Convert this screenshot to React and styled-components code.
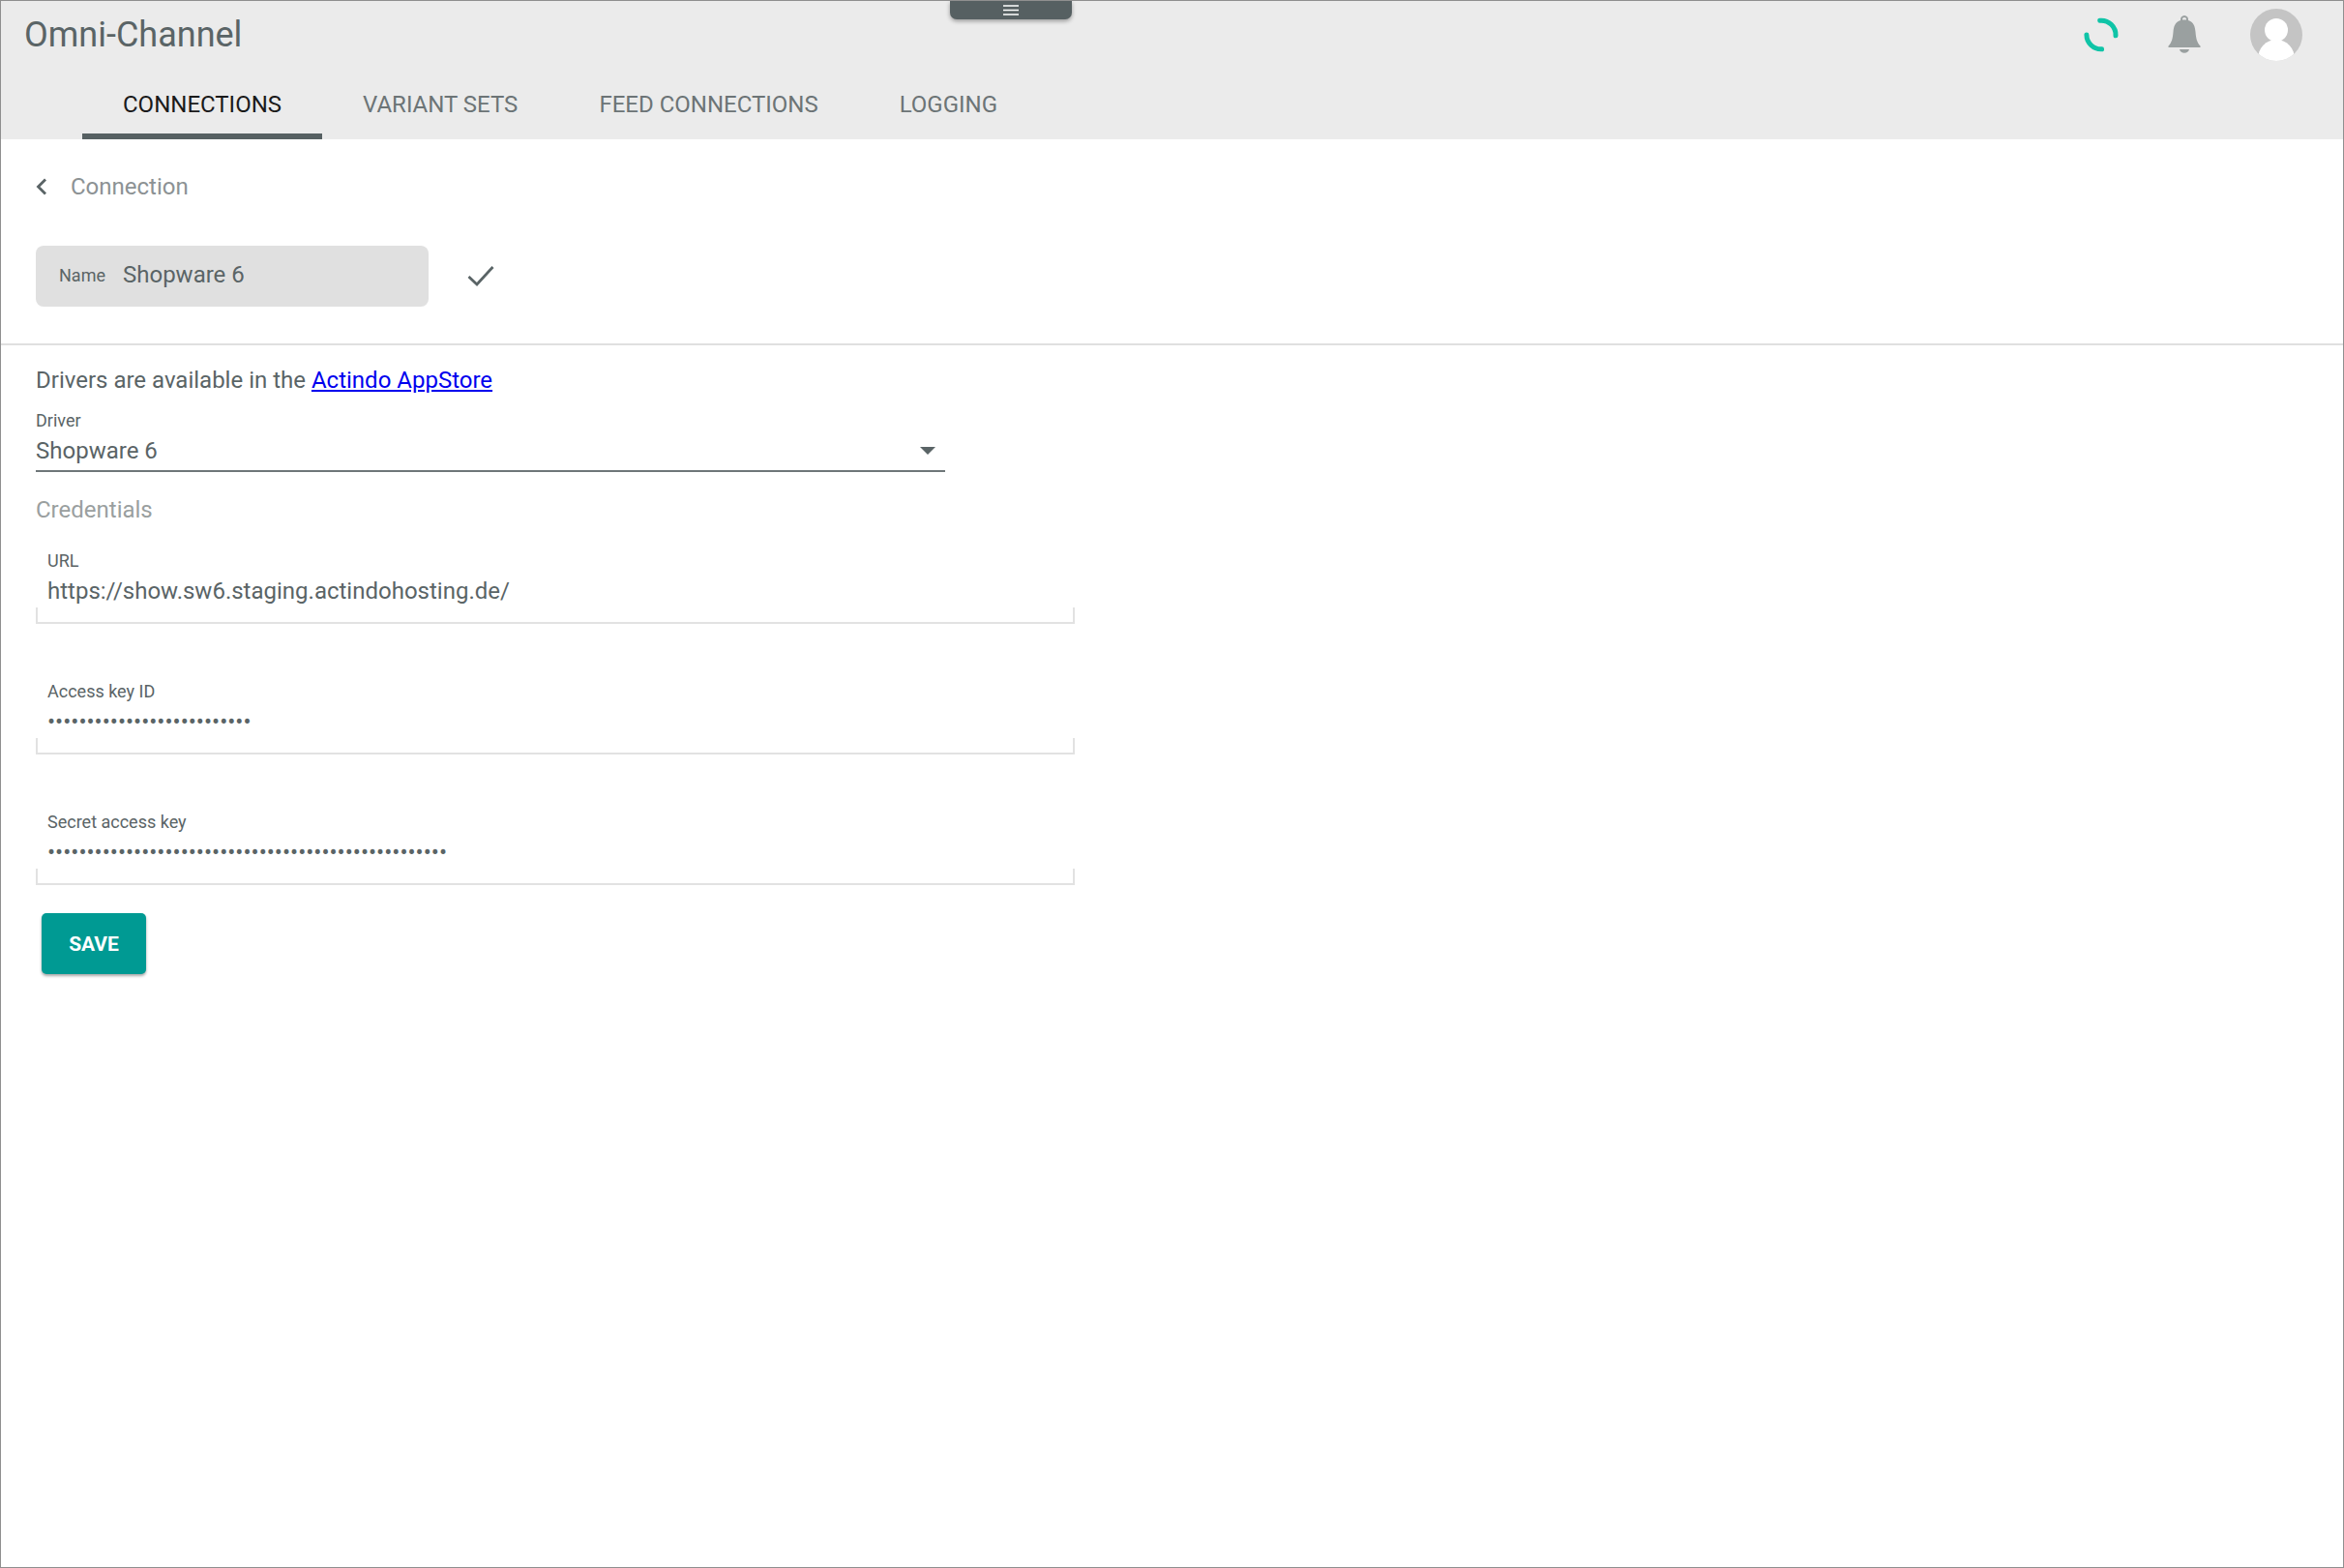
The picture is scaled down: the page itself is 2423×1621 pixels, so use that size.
import styled, { createGlobalStyle } from "styled-components";

const GlobalStyle = createGlobalStyle`
    html, body {
        margin: 0;
        padding: 0;
        background: #ffffff;
    }

    body {
        font-family: "Roboto", "Liberation Sans", sans-serif;
        color: #5a6466;
    }
`;

const credentials = [
    { label: "URL", value: "https://show.sw6.staging.actindohosting.de/" },
    { label: "Access key ID", value: "•".repeat(26) },
    { label: "Secret access key", value: "•".repeat(51) },
];

const tabs = ["CONNECTIONS", "VARIANT SETS", "FEED CONNECTIONS", "LOGGING"];

export default function App() {
    return (
        <>
            <GlobalStyle />
            <Frame>
                <Header>
                    <MenuHandle>
                        <svg width="16" height="11" viewBox="0 0 16 11">
                            <path d="M0 1h16M0 5.5h16M0 10h16" stroke="#ffffff" strokeWidth="1.4" />
                        </svg>
                    </MenuHandle>
                    <TopRow>
                        <Title>Omni-Channel</Title>
                        <Actions>
                            <Spinner width="36" height="36" viewBox="0 0 36 36" fill="none">
                                <path
                                    d="M16.7 3.2A15 15 0 0 1 33 18.8M2.9 18A15 15 0 0 0 18.6 32.8"
                                    stroke="#0fc4a7"
                                    strokeWidth="5"
                                    strokeLinecap="round"
                                />
                            </Spinner>
                            <BellIcon width="34" height="40" viewBox="0 0 34 40">
                                <path
                                    fillRule="evenodd"
                                    d="M17 0a4 4 0 0 1 3.900 4.900C26.500 6.500 28 11 28.500 17c.5 6.500 1.500 11 5 14.500V33H.5v-1.500C4 28 5 23.500 5.500 17 6 11 7.500 6.500 13.100 4.900A4 4 0 0 1 17 0Zm0 2a2 2 0 0 0-1.900 2.500h3.800A2 2 0 0 0 17 2Z"
                                />
                                <path d="M12 35h10a5.200 5.200 0 0 1-10 0Z" />
                            </BellIcon>
                            <Avatar>
                                <AvatarHead />
                                <AvatarBody />
                            </Avatar>
                        </Actions>
                    </TopRow>
                    <TabRow>
                        {tabs.map((tab, index) => (
                            <Tab key={tab} $active={index === 0}>{tab}</Tab>
                        ))}
                    </TabRow>
                </Header>

                <NameSection>
                    <BackRow>
                        <svg width="12" height="18" viewBox="0 0 12 18" fill="none">
                            <path d="M10 1.500 2.500 9l7.500 7.500" stroke="#5a6466" strokeWidth="2.800" />
                        </svg>
                        <BackLabel>Connection</BackLabel>
                    </BackRow>
                    <NameRow>
                        <NameField>
                            <NameLabel>Name</NameLabel>
                            <NameValue>Shopware 6</NameValue>
                        </NameField>
                        <ConfirmIcon width="28" height="22" viewBox="0 0 28 22" fill="none">
                            <path d="M1.500 12 10 20 26.500 2" stroke="#5a6466" strokeWidth="2.800" />
                        </ConfirmIcon>
                    </NameRow>
                </NameSection>

                <Content>
                    <Hint>
                        Drivers are available in the <HintLink href="#">Actindo AppStore</HintLink>
                    </Hint>
                    <DriverLabel>Driver</DriverLabel>
                    <Select>
                        <span>Shopware 6</span>
                        <Caret />
                    </Select>
                    <SectionTitle>Credentials</SectionTitle>
                    <Fields>
                        {credentials.map((field) => (
                            <Field key={field.label}>
                                <SmallLabel>{field.label}</SmallLabel>
                                <FieldValue>{field.value}</FieldValue>
                            </Field>
                        ))}
                    </Fields>
                    <SaveButton type="button">SAVE</SaveButton>
                </Content>
            </Frame>
        </>
    );
}

const Frame = styled.div`
    box-sizing: border-box;
    width: 2423px;
    height: 1621px;
    border: 1px solid #8f8f8f;
    overflow: hidden;
`;

const Header = styled.header`
    position: relative;
    height: 143px;
    background: #ebebeb;
`;

const MenuHandle = styled.div`
    position: absolute;
    top: 0;
    left: 981px;
    width: 126px;
    height: 19px;
    display: flex;
    align-items: center;
    justify-content: center;
    background: #566062;
    border-radius: 0 0 7px 7px;
    box-shadow: 0 2px 4px rgba(0, 0, 0, 0.35);
`;

const TopRow = styled.div`
    height: 77px;
    display: flex;
    justify-content: space-between;
    padding: 0 42px 0 24px;
`;

const Title = styled.h1`
    margin: 15px 0 0;
    font-size: 36px;
    line-height: 40px;
    font-weight: 400;
    color: #5a6466;
`;

const Actions = styled.div`
    display: flex;
    align-items: flex-start;
    padding-top: 8px;
`;

const Spinner = styled.svg`
    margin-top: 9px;
`;

const BellIcon = styled.svg`
    fill: #9aa0a0;
    margin: 7px 51px 0 51px;
`;

const Avatar = styled.div`
    position: relative;
    width: 54px;
    height: 54px;
    border-radius: 50%;
    background: #c4c4c4;
    overflow: hidden;
`;

const AvatarHead = styled.div`
    position: absolute;
    top: 10px;
    left: 15px;
    width: 24px;
    height: 24px;
    border-radius: 50%;
    background: #ffffff;
`;

const AvatarBody = styled.div`
    position: absolute;
    top: 32px;
    left: 8px;
    width: 38px;
    height: 40px;
    border-radius: 50%;
    background: #ffffff;
`;

const TabRow = styled.nav`
    display: flex;
    padding-left: 84px;
`;

const Tab = styled.div`
    box-sizing: border-box;
    height: 66px;
    padding: 0 42px;
    display: flex;
    align-items: center;
    font-size: 24px;
    border-bottom: 6px solid ${(props) => (props.$active ? "#566062" : "transparent")};
    color: ${(props) => (props.$active ? "#1a1a1a" : "#6c7476")};
`;

const NameSection = styled.section`
    padding: 34px 36px 38px;
    border-bottom: 2px solid #e0e0e0;
`;

const BackRow = styled.div`
    height: 30px;
    display: flex;
    align-items: center;
    gap: 24px;
`;

const BackLabel = styled.span`
    font-size: 24px;
    color: #8c9294;
`;

const NameRow = styled.div`
    margin-top: 46px;
    display: flex;
    align-items: center;
    gap: 40px;
`;

const NameField = styled.div`
    box-sizing: border-box;
    width: 406px;
    height: 63px;
    padding: 0 24px 3px;
    display: flex;
    align-items: center;
    gap: 18px;
    background: #e0e0e0;
    border-radius: 8px;
`;

const NameLabel = styled.span`
    font-size: 18px;
`;

const NameValue = styled.span`
    font-size: 24px;
`;

const ConfirmIcon = styled.svg`
    margin-bottom: 2px;
`;

const Content = styled.main`
    padding: 21px 36px 0;
`;

const Hint = styled.p`
    margin: 0;
    font-size: 24px;
    line-height: 30px;
`;

const HintLink = styled.a`
    color: #0000ee;
`;

const SmallLabel = styled.div`
    font-size: 18px;
    line-height: 22px;
`;

const DriverLabel = styled(SmallLabel)`
    margin-top: 16px;
`;

const Select = styled.div`
    box-sizing: border-box;
    width: 940px;
    height: 40px;
    margin-top: 2px;
    padding: 0 10px 2px 0;
    display: flex;
    align-items: center;
    justify-content: space-between;
    font-size: 24px;
    border-bottom: 2px solid #6f7779;
`;

const Caret = styled.div`
    width: 0;
    height: 0;
    border-left: 8px solid transparent;
    border-right: 8px solid transparent;
    border-top: 8px solid #5a6466;
`;

const SectionTitle = styled.h2`
    margin: 24px 0 0;
    font-size: 24px;
    line-height: 30px;
    font-weight: 400;
    color: #9a9f9f;
`;

const Fields = styled.div`
    margin-top: 27px;
    width: 1074px;
    display: flex;
    flex-direction: column;
    gap: 59px;
`;

const Field = styled.div`
    position: relative;
    box-sizing: border-box;
    height: 76px;
    padding-left: 12px;
    border-bottom: 2px solid #e2e2e2;

    &::before,
    &::after {
        content: "";
        position: absolute;
        bottom: 0;
        width: 2px;
        height: 15px;
        background: #e2e2e2;
    }

    &::before {
        left: 0;
    }

    &::after {
        right: 0;
    }
`;

const FieldValue = styled.div`
    margin-top: 5px;
    font-size: 24px;
    line-height: 30px;
    color: #5a6466;
`;

const SaveButton = styled.button`
    display: block;
    width: 108px;
    height: 63px;
    margin: 29px 0 0 6px;
    padding: 0;
    border: none;
    border-radius: 5px;
    background: #009a93;
    color: #ffffff;
    font-family: inherit;
    font-size: 21px;
    font-weight: 700;
    box-shadow: 0 2px 3px rgba(0, 0, 0, 0.35);
`;
